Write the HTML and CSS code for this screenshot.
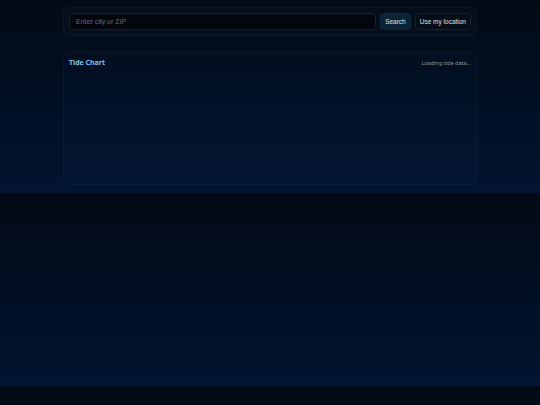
FILE: index.html
```html
<!DOCTYPE html>
<html>
<head>
  <title>Tide Chart</title>
  <link rel="stylesheet" href="styles.css">
</head>
<body>
  <div class="wrap">
    <form class="search">
      <input type="text" id="place" placeholder="Enter city or ZIP">
      <button type="button" class="btn btn-primary">Search</button>
      <button type="button" class="btn">Use my location</button>
    </form>

    <div class="card">
      <div class="card-head">
        <h2>Tide Chart</h2>
        <span class="status">Loading tide data...</span>
      </div>
      <div class="chart"></div>
    </div>
  </div>
</body>
</html>
```

FILE: styles.css
```css
body {
  margin: 0;
  padding: 7px 0 8px;
  font-family: "Liberation Sans", Arial, sans-serif;
  background: linear-gradient(180deg, #020a15, #011431);
  color: #c8d4e0;
}

.wrap {
  max-width: 414px;
  margin: 0 auto;
}

.search {
  display: flex;
  gap: 4px;
  padding: 5px;
  border: 1px solid rgba(255, 255, 255, 0.04);
  border-radius: 7px;
  background: rgba(255, 255, 255, 0.015);
}

.search input {
  flex: 1;
  height: 17px;
  padding: 0 6px;
  box-sizing: border-box;
  font-family: inherit;
  font-size: 7px;
  color: #c8d4e0;
  background: #03070d;
  border: 1px solid #15202c;
  border-radius: 4px;
  outline: none;
}

.search input::placeholder {
  color: #626b75;
}

.btn {
  height: 17px;
  padding: 0 4px;
  font-family: inherit;
  font-size: 6.5px;
  color: #dbe4ec;
  background: #050d17;
  border: 1px solid #15212d;
  border-radius: 4px;
}

.btn-primary {
  background: #0a2436;
  border-color: #0e2c40;
}

.card {
  margin-top: 16px;
  height: 133px;
  box-sizing: border-box;
  padding: 5px 5px;
  border: 1px solid rgba(255, 255, 255, 0.035);
  border-radius: 7px;
  background: rgba(120, 160, 220, 0.02);
}

.card-head {
  display: flex;
  justify-content: space-between;
  align-items: center;
}

.card-head h2 {
  margin: 0;
  font-family: "Noto Sans", sans-serif;
  font-size: 7px;
  font-weight: 700;
  color: #7ec3e6;
}

.status {
  font-family: "Noto Sans", sans-serif;
  font-size: 5.5px;
  color: #8a939c;
}
```
